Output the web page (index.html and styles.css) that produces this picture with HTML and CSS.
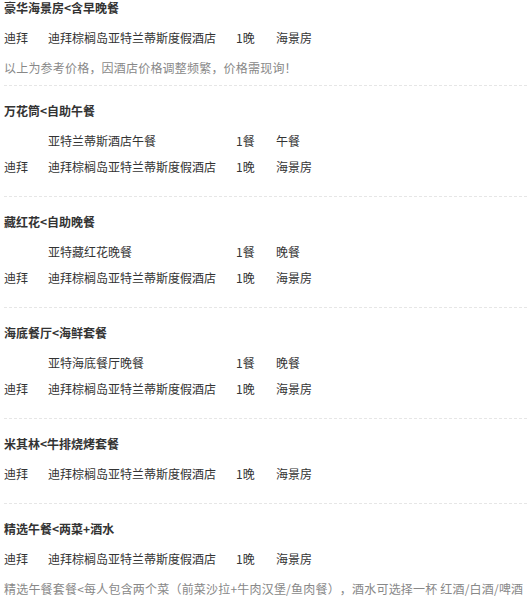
FILE: index.html
```html
<!DOCTYPE html>
<html lang="zh-CN">
<head>
<meta charset="utf-8">
<title>套餐</title>
<link rel="stylesheet" href="styles.css">
</head>
<body>
<div class="page">
  <section class="sec">
    <h4 class="title">豪华海景房&lt;含早晚餐</h4>
    <div class="row"><span>迪拜</span><span>迪拜棕榈岛亚特兰蒂斯度假酒店</span><span>1晚</span><span>海景房</span></div>
    <p class="note">以上为参考价格，因酒店价格调整频繁，价格需现询！</p>
  </section>
  <section class="sec">
    <h4 class="title">万花筒&lt;自助午餐</h4>
    <div class="row"><span></span><span>亚特兰蒂斯酒店午餐</span><span>1餐</span><span>午餐</span></div>
    <div class="row"><span>迪拜</span><span>迪拜棕榈岛亚特兰蒂斯度假酒店</span><span>1晚</span><span>海景房</span></div>
  </section>
  <section class="sec">
    <h4 class="title">藏红花&lt;自助晚餐</h4>
    <div class="row"><span></span><span>亚特藏红花晚餐</span><span>1餐</span><span>晚餐</span></div>
    <div class="row"><span>迪拜</span><span>迪拜棕榈岛亚特兰蒂斯度假酒店</span><span>1晚</span><span>海景房</span></div>
  </section>
  <section class="sec">
    <h4 class="title">海底餐厅&lt;海鲜套餐</h4>
    <div class="row"><span></span><span>亚特海底餐厅晚餐</span><span>1餐</span><span>晚餐</span></div>
    <div class="row"><span>迪拜</span><span>迪拜棕榈岛亚特兰蒂斯度假酒店</span><span>1晚</span><span>海景房</span></div>
  </section>
  <section class="sec">
    <h4 class="title">米其林&lt;牛排烧烤套餐</h4>
    <div class="row"><span>迪拜</span><span>迪拜棕榈岛亚特兰蒂斯度假酒店</span><span>1晚</span><span>海景房</span></div>
  </section>
  <section class="sec last">
    <h4 class="title">精选午餐&lt;两菜+酒水</h4>
    <div class="row"><span>迪拜</span><span>迪拜棕榈岛亚特兰蒂斯度假酒店</span><span>1晚</span><span>海景房</span></div>
    <p class="note">精选午餐套餐&lt;每人包含两个菜（前菜沙拉+牛肉汉堡/鱼肉餐），酒水可选择一杯 红酒/白酒/啤酒</p>
  </section>
</div>
</body>
</html>
```
FILE: styles.css
```css
html, body {
  margin: 0;
  padding: 0;
  background: #fff;
}
body {
  font-family: "Noto Sans CJK SC", "Microsoft YaHei", "Liberation Sans", sans-serif;
  font-size: 12px;
  color: #333;
  text-spacing-trim: space-all;
}
.page {
  padding: 0 2px 0 4px;
}
.sec {
  border-bottom: 1px dashed #e6e6e6;
  padding-bottom: 16px;
  padding-top: 17px;
}
.sec:first-child {
  padding-top: 0;
}
.sec.last {
  border-bottom: none;
}
.sec:has(.note) {
  padding-bottom: 7px;
}
.title {
  margin: 0 0 9px;
  font-size: 12px;
  font-weight: bold;
  line-height: 16px;
  color: #333;
}
.row {
  display: grid;
  grid-template-columns: 44px 188px 40px auto;
  line-height: 26px;
  white-space: nowrap;
}
.note {
  margin: 7px 0 0;
  line-height: 20px;
  color: #888;
  white-space: nowrap;
  letter-spacing: 0.2px;
}
```
